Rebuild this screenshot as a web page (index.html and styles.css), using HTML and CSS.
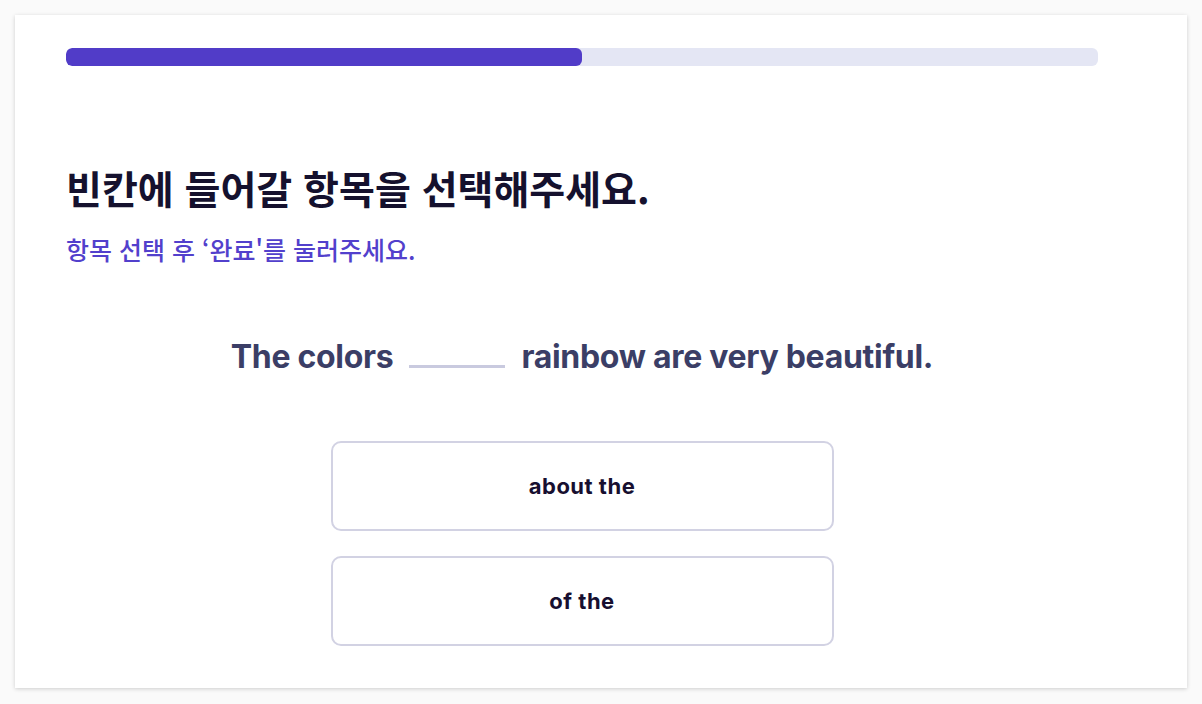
FILE: index.html
```html
<!DOCTYPE html>
<html lang="ko">
<head>
<meta charset="utf-8">
<link rel="stylesheet" href="styles.css">
</head>
<body>
<div class="card">
  <div class="progress"><div class="progress-fill" style="width:50%"></div></div>
  <h1 class="title">빈칸에 들어갈 항목을 선택해주세요.</h1>
  <p class="subtitle">항목 선택 후 ‘완료'를 눌러주세요.</p>
  <div class="sentence">
    <span>The colors</span>
    <span class="blank"></span>
    <span>rainbow are very beautiful.</span>
  </div>
  <div class="options">
    <button class="option">about the</button>
    <button class="option">of the</button>
  </div>
</div>
</body>
</html>
```

FILE: styles.css
```css
html, body {
  margin: 0;
  padding: 0;
  background: #fafafa;
}
body {
  padding: 15px;
  font-family: "Inter", "Noto Sans CJK KR", sans-serif;
}
.card {
  background: #fff;
  width: 1172px;
  height: 673px;
  box-sizing: border-box;
  padding: 33px 89px 0 51px;
  box-shadow: 0 1px 4px rgba(0,0,0,0.18);
}
.progress {
  height: 18px;
  border-radius: 6px;
  background: #e4e6f4;
  overflow: hidden;
}
.progress-fill {
  height: 100%;
  background: #513cc8;
  border-radius: 6px;
}
.title {
  margin: 96px 0 0;
  font-family: "Noto Sans CJK KR", sans-serif;
  font-size: 39px;
  font-weight: 700;
  color: #15112e;
  letter-spacing: 0;
  line-height: 50px;
}
.subtitle {
  margin: 22px 0 0;
  font-family: "Noto Sans CJK KR", sans-serif;
  font-size: 25px;
  font-weight: 500;
  color: #5240cc;
  letter-spacing: 0;
  line-height: 30px;
}
.sentence {
  margin-top: 73px;
  display: flex;
  justify-content: center;
  align-items: baseline;
  gap: 16px;
  font-size: 32px;
  font-weight: 700;
  color: #3b3e66;
  letter-spacing: -0.3px;
  line-height: 40px;
}
.blank {
  display: inline-block;
  width: 96px;
  height: 3px;
  background: #c9cadf;
}
.options {
  margin-top: 64px;
  display: flex;
  flex-direction: column;
  align-items: center;
  gap: 25px;
}
.option {
  width: 503px;
  height: 90px;
  background: #fff;
  border: 2px solid #d2d2e3;
  border-radius: 10px;
  font-family: "Inter", sans-serif;
  font-size: 22px;
  font-weight: 700;
  color: #170f30;
  letter-spacing: 0.5px;
}
```
